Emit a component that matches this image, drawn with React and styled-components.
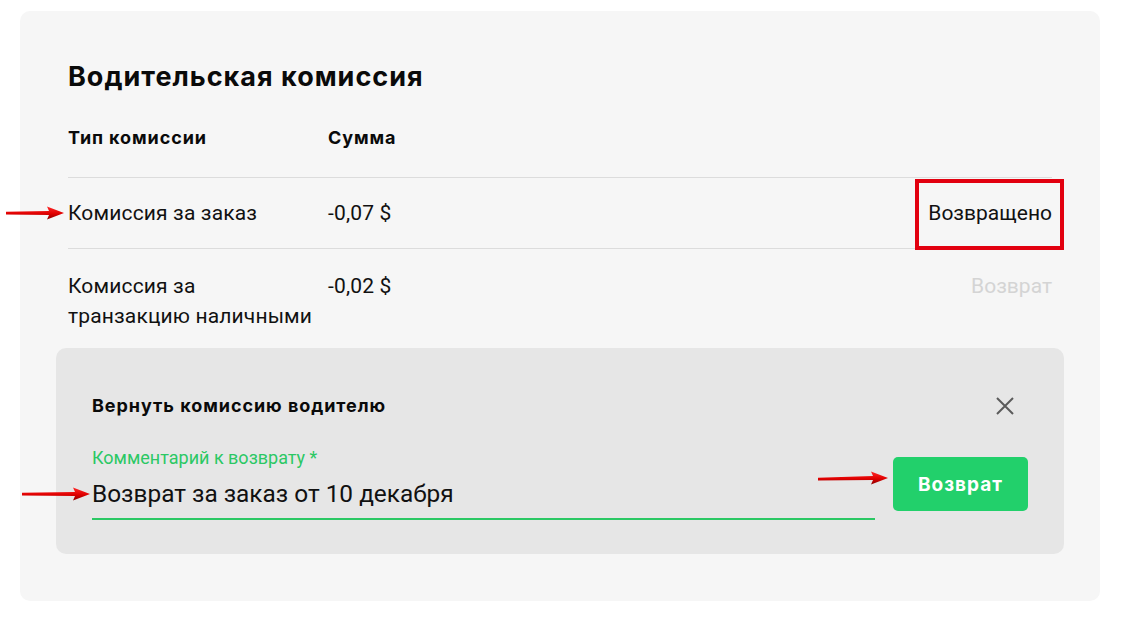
import React from "react";
import styled, { createGlobalStyle } from "styled-components";

const Global = createGlobalStyle`
  html, body { margin: 0; padding: 0; background: #ffffff; }
  body { font-family: Roboto, "Noto Sans", Arial, sans-serif; color: #111; }
  * { box-sizing: border-box; }
`;

const Page = styled.div`
  position: relative;
  width: 1122px;
  height: 620px;
  padding: 11px 22px 0 20px;
`;

const Card = styled.section`
  width: 1080px;
  height: 590px;
  background: #f6f6f6;
  border-radius: 10px;
  padding: 49px 48px 0 48px;
`;

const Title = styled.h1`
  margin: 0;
  font-family: Inter, "Noto Sans", sans-serif;
  font-weight: 700;
  font-size: 27px;
  line-height: 34px;
  letter-spacing: 1px;
  color: #0a0a0a;
`;

const Row = styled.div`
  display: grid;
  grid-template-columns: 260px 1fr auto;
  align-items: ${(p) => (p.$top ? "start" : "center")};
  min-height: ${(p) => p.$h || 0}px;
  padding: ${(p) => p.$pad || "0"};
  border-bottom: ${(p) => (p.$line ? "1px solid #dcdcdc" : "none")};
`;

const HeadCell = styled.div`
  font-family: Inter, "Noto Sans", sans-serif;
  font-weight: 700;
  font-size: 18px;
  line-height: 22px;
  letter-spacing: 0.9px;
  color: #0a0a0a;
`;

const Cell = styled.div`
  font-size: 21px;
  line-height: 30px;
  letter-spacing: 0.15px;
  color: #111;
`;

const Action = styled.div`
  position: relative;
  font-size: 21px;
  line-height: 30px;
  text-align: right;
  color: ${(p) => (p.$muted ? "#d4d4d4" : "#111")};
`;

const Highlight = styled.span`
  position: absolute;
  left: -13px;
  right: -12px;
  top: -19px;
  bottom: -22px;
  border: 4px solid #e2000f;
  pointer-events: none;
`;

const Panel = styled.div`
  margin: 0 -12px;
  height: 206px;
  background: #e6e6e6;
  border-radius: 10px;
  padding: 46px 36px 0 36px;
`;

const PanelHead = styled.div`
  display: flex;
  align-items: center;
  justify-content: space-between;
  height: 24px;
`;

const PanelTitle = styled.h2`
  margin: 0;
  font-family: Inter, "Noto Sans", sans-serif;
  font-weight: 700;
  font-size: 18px;
  line-height: 24px;
  letter-spacing: 0.95px;
  color: #0a0a0a;
`;

const Close = styled.button`
  width: 20px;
  height: 20px;
  margin-right: 13px;
  padding: 0;
  border: 0;
  background: transparent;
  display: flex;
  align-items: center;
  justify-content: center;
  cursor: pointer;
`;

const FormRow = styled.div`
  display: flex;
  align-items: flex-start;
  gap: 18px;
  margin-top: 29px;
`;

const Field = styled.label`
  position: relative;
  flex: 0 0 783px;
  display: flex;
  flex-direction: column;
  border-bottom: 2px solid #2bc864;
`;

const FieldLabel = styled.span`
  font-size: 18px;
  line-height: 22px;
  color: #2bc864;
`;

const Input = styled.input`
  border: 0;
  background: transparent;
  padding: 0;
  margin: 10px 0 9px;
  font-family: Roboto, "Noto Sans", sans-serif;
  font-size: 24.4px;
  line-height: 30px;
  height: 30px;
  color: #111;
  outline: none;
`;

const Button = styled.button`
  position: relative;
  width: 135px;
  height: 54px;
  margin-top: 10px;
  border: 0;
  border-radius: 5px;
  background: #22d06b;
  color: #fff;
  font-family: Inter, "Noto Sans", sans-serif;
  font-weight: 700;
  font-size: 19px;
  letter-spacing: 1px;
  cursor: pointer;
`;

const Arrow = styled.svg`
  position: absolute;
  left: ${(p) => p.$x}px;
  top: ${(p) => p.$y}px;
  overflow: visible;
  pointer-events: none;
`;

function RedArrow({ x, y, w, tilt = 0 }) {
  const head = 17;
  return (
    <Arrow $x={x} $y={y} width={w} height="16" viewBox={`0 0 ${w} 16`}>
      <defs>
        <linearGradient id={`g${x}`} x1="0" y1="0" x2="0" y2="1">
          <stop offset="0" stopColor="#ff2a2a" />
          <stop offset="0.55" stopColor="#e00000" />
          <stop offset="1" stopColor="#8a0000" />
        </linearGradient>
      </defs>
      <path
        d={`M0 ${6.8 + tilt} L${w - head + 2} 6 L${w - head} 1.5 L${w} 8 L${w - head} 14.5 L${w - head + 2} 10 L0 ${9.4 + tilt} Z`}
        fill={`url(#g${x})`}
      />
    </Arrow>
  );
}

export default function App() {
  return (
    <>
      <Global />
      <Page>
        <Card>
          <Title>Водительская комиссия</Title>
          <Row $pad="33px 0 28px" $line>
            <HeadCell>Тип комиссии</HeadCell>
            <HeadCell>Сумма</HeadCell>
            <span />
          </Row>
          <Row $h={71} $line>
            <Cell>Комиссия за заказ</Cell>
            <Cell>-0,07 $</Cell>
            <Action>
              Возвращено
              <Highlight />
            </Action>
          </Row>
          <Row $top $pad="22px 0 17px">
            <Cell>
              Комиссия за
              <br />
              транзакцию наличными
            </Cell>
            <Cell>-0,02 $</Cell>
            <Action $muted>Возврат</Action>
          </Row>
          <Panel>
            <PanelHead>
              <PanelTitle>Вернуть комиссию водителю</PanelTitle>
              <Close aria-label="Закрыть">
                <svg width="18" height="18" viewBox="0 0 18 18">
                  <path d="M1 1 L17 17 M17 1 L1 17" stroke="#5b5b5b" strokeWidth="2" />
                </svg>
              </Close>
            </PanelHead>
            <FormRow>
              <Field>
                <FieldLabel>Комментарий к возврату *</FieldLabel>
                <Input defaultValue="Возврат за заказ от 10 декабря" />
              </Field>
              <Button>Возврат</Button>
            </FormRow>
          </Panel>
        </Card>
        <RedArrow x={6} y={205} w={58} />
        <RedArrow x={22} y={486} w={68} />
        <RedArrow x={818} y={470} w={70} tilt={1} />
      </Page>
    </>
  );
}
